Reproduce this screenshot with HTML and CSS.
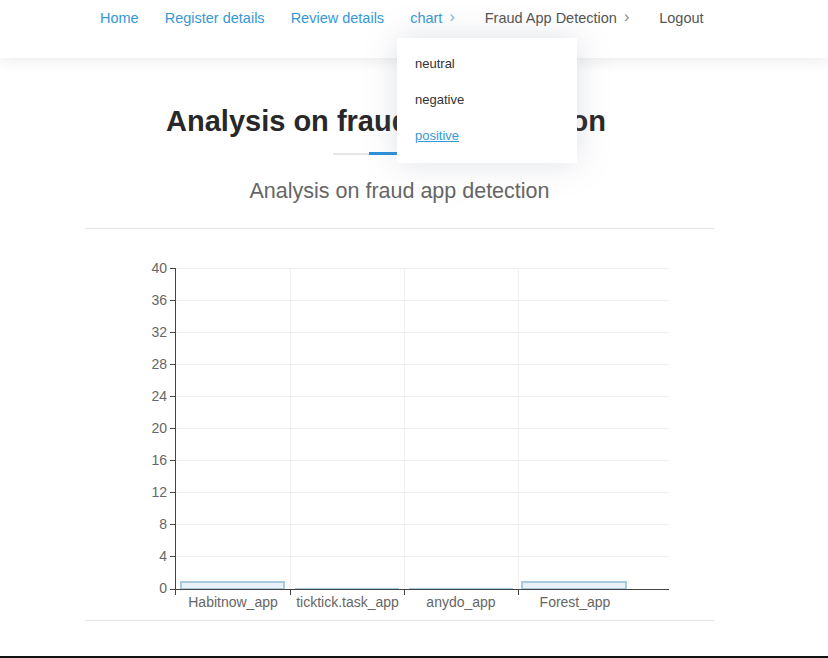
FILE: index.html
```html
<!DOCTYPE html>
<html>
<head>
<meta charset="utf-8">
<link rel="stylesheet" href="styles.css">
</head>
<body>
<header class="header">
  <nav class="nav">
    <a class="nav-link blue" href="#">Home</a>
    <a class="nav-link blue" href="#">Register details</a>
    <a class="nav-link blue" href="#">Review details</a>
    <span class="nav-link blue drop">chart<span class="chev">&#8250;</span></span>
    <span class="nav-link gray drop">Fraud App Detection<span class="chev">&#8250;</span></span>
    <a class="nav-link gray" href="#">Logout</a>
  </nav>
  <ul class="dropdown">
    <li><a class="dd-link" href="#">neutral</a></li>
    <li><a class="dd-link" href="#">negative</a></li>
    <li><a class="dd-link active" href="#">positive</a></li>
  </ul>
</header>
<main class="main">
  <h2 class="section-title">Analysis on fraud app detection</h2>
  <section class="panel">
    <h3 class="panel-title">Analysis on fraud app detection</h3>
    <div class="panel-body">
      <svg class="chart" width="629" height="391" viewBox="85 229 629 391" font-family="Liberation Sans, Arial, sans-serif" font-size="14">
        <g stroke="#f0f0f0" stroke-width="1">
          <line x1="175" y1="268.5" x2="669" y2="268.5"/>
          <line x1="175" y1="300.5" x2="669" y2="300.5"/>
          <line x1="175" y1="332.5" x2="669" y2="332.5"/>
          <line x1="175" y1="364.5" x2="669" y2="364.5"/>
          <line x1="175" y1="396.5" x2="669" y2="396.5"/>
          <line x1="175" y1="428.5" x2="669" y2="428.5"/>
          <line x1="175" y1="460.5" x2="669" y2="460.5"/>
          <line x1="175" y1="492.5" x2="669" y2="492.5"/>
          <line x1="175" y1="524.5" x2="669" y2="524.5"/>
          <line x1="175" y1="556.5" x2="669" y2="556.5"/>
          <line x1="290.5" y1="268" x2="290.5" y2="589"/>
          <line x1="404.5" y1="268" x2="404.5" y2="589"/>
          <line x1="518.5" y1="268" x2="518.5" y2="589"/>
        </g>
        <g fill="rgba(168,200,220,0.25)" stroke="#a9c9dd" stroke-width="2">
          <rect x="181" y="582" width="103" height="7"/>
          <rect x="522" y="582" width="104" height="7"/>
        </g>
        <g stroke="#a9c9dd" stroke-width="2">
          <line x1="295" y1="589" x2="399" y2="589"/>
          <line x1="409" y1="589" x2="513" y2="589"/>
        </g>
        <g stroke="#444" stroke-width="1">
          <line x1="175.5" y1="268" x2="175.5" y2="595"/>
          <line x1="170" y1="589.5" x2="669" y2="589.5"/>
          <line x1="170" y1="268.5" x2="175" y2="268.5"/>
          <line x1="170" y1="300.5" x2="175" y2="300.5"/>
          <line x1="170" y1="332.5" x2="175" y2="332.5"/>
          <line x1="170" y1="364.5" x2="175" y2="364.5"/>
          <line x1="170" y1="396.5" x2="175" y2="396.5"/>
          <line x1="170" y1="428.5" x2="175" y2="428.5"/>
          <line x1="170" y1="460.5" x2="175" y2="460.5"/>
          <line x1="170" y1="492.5" x2="175" y2="492.5"/>
          <line x1="170" y1="524.5" x2="175" y2="524.5"/>
          <line x1="170" y1="556.5" x2="175" y2="556.5"/>
          <line x1="290.5" y1="589" x2="290.5" y2="595"/>
          <line x1="404.5" y1="589" x2="404.5" y2="595"/>
          <line x1="518.5" y1="589" x2="518.5" y2="595"/>
        </g>
        <g fill="#666" text-anchor="end">
          <text x="167" y="273">40</text>
          <text x="167" y="305">36</text>
          <text x="167" y="337">32</text>
          <text x="167" y="369">28</text>
          <text x="167" y="401">24</text>
          <text x="167" y="433">20</text>
          <text x="167" y="465">16</text>
          <text x="167" y="497">12</text>
          <text x="167" y="529">8</text>
          <text x="167" y="561">4</text>
          <text x="167" y="593">0</text>
        </g>
        <g fill="#666" text-anchor="middle">
          <text x="233" y="607">Habitnow_app</text>
          <text x="347.5" y="607">ticktick.task_app</text>
          <text x="461" y="607">anydo_app</text>
          <text x="575" y="607">Forest_app</text>
        </g>
      </svg>
    </div>
  </section>
</main>
<footer class="footer"></footer>
</body>
</html>
```
FILE: styles.css
```css
* { box-sizing: border-box; }
html, body { margin: 0; padding: 0; }
body {
  font-family: "Liberation Sans", Arial, sans-serif;
  background: #fff;
  color: #333;
  width: 828px;
  height: 658px;
  overflow: hidden;
  position: relative;
}
.header {
  height: 58px;
  background: #fff;
  box-shadow: 0 2px 14px rgba(0, 0, 0, 0.09);
  position: relative;
  z-index: 5;
}
.nav {
  display: flex;
  align-items: center;
  gap: 26px;
  padding-left: 100px;
  height: 36px;
}
.nav-link {
  font-size: 14.5px;
  text-decoration: none;
  white-space: nowrap;
}
.nav-link.drop { margin-right: 4px; }
.blue { color: #3698d8; }
.gray { color: #555; }
.chev {
  display: inline-block;
  margin-left: 7px;
  font-size: 16px;
  color: #888;
  position: relative;
  top: -1px;
}
.blue .chev { color: #7ab8e4; }
.dropdown {
  position: absolute;
  left: 397px;
  top: 38px;
  width: 180px;
  height: 125px;
  margin: 0;
  padding: 18px 0 0 18px;
  list-style: none;
  background: #fff;
  box-shadow: 0 0 30px rgba(127, 137, 161, 0.25);
  display: flex;
  flex-direction: column;
  gap: 20px;
}
.dd-link {
  font-size: 13px;
  color: #333;
  text-decoration: none;
  line-height: 16px;
  display: block;
}
.dd-link.active {
  color: #3698d8;
  text-decoration: underline;
}
.main {
  padding-top: 45px;
}
.section-title {
  margin: 0;
  width: 772px;
  text-align: center;
  font-size: 29px;
  font-weight: bold;
  color: #282828;
  line-height: 36px;
  padding-bottom: 16px;
  position: relative;
}
.section-title::before {
  content: "";
  position: absolute;
  left: 333px;
  bottom: 0;
  width: 120px;
  height: 2px;
  background: #e6e6e6;
}
.section-title::after {
  content: "";
  position: absolute;
  left: 369px;
  bottom: 0;
  width: 40px;
  height: 3px;
  background: #2d8fd9;
}
.panel {
  margin: 0 0 0 85px;
  width: 629px;
  border-bottom: 1px solid #e5e5e5;
}
.panel-title {
  margin: 0;
  font-size: 21.5px;
  font-weight: normal;
  color: #666;
  text-align: center;
  line-height: 24px;
  padding: 24px 0 25px;
  border-bottom: 1px solid #e5e5e5;
}
.panel-body {
  height: 391px;
}
.chart { display: block; }
.footer {
  position: absolute;
  left: 0;
  right: 0;
  bottom: 0;
  height: 2px;
  background: #111;
}
```
